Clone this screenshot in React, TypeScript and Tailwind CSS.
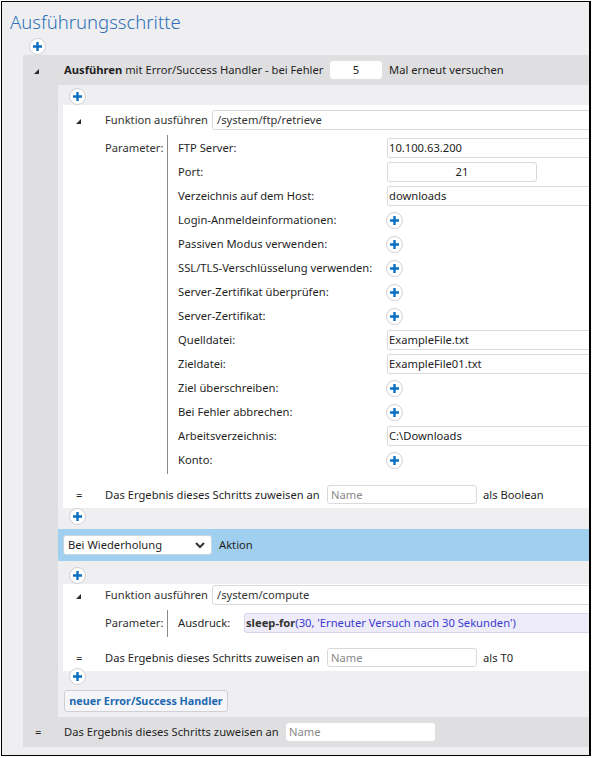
import React from "react";

function Plus({ className = "" }: { className?: string }) {
  return (
    <div
      className={
        "relative z-10 flex h-[17px] w-[17px] shrink-0 items-center justify-center rounded-full border border-[#cfcfd4] bg-white " +
        className
      }
    >
      <svg width="9" height="9" viewBox="0 0 9 9">
        <path d="M4.5 0v9M0 4.5h9" stroke="#0a6fc2" strokeWidth="2.4" />
      </svg>
    </div>
  );
}

function Tri() {
  return (
    <svg width="5" height="5" viewBox="0 0 5 5">
      <polygon points="5,0 5,5 0,5" fill="#2b2b2b" />
    </svg>
  );
}

function TextInput({ value }: { value: string }) {
  return (
    <div className="flex h-[20px] w-[260px] items-center rounded-l-[3px] border border-[#d9d9dc] bg-white pl-[1px] text-[#222]">
      {value}
    </div>
  );
}

function NameInput() {
  return (
    <div className="flex h-[19px] w-[150px] items-center rounded-[3px] border border-[#d9d9dc] bg-white pl-[3px] text-[#8a8a8a]">
      Name
    </div>
  );
}

type Val = { kind: "input"; v: string } | { kind: "port"; v: string } | { kind: "plus" };

const params: [string, Val][] = [
  ["FTP Server:", { kind: "input", v: "10.100.63.200" }],
  ["Port:", { kind: "port", v: "21" }],
  ["Verzeichnis auf dem Host:", { kind: "input", v: "downloads" }],
  ["Login-Anmeldeinformationen:", { kind: "plus" }],
  ["Passiven Modus verwenden:", { kind: "plus" }],
  ["SSL/TLS-Verschlüsselung verwenden:", { kind: "plus" }],
  ["Server-Zertifikat überprüfen:", { kind: "plus" }],
  ["Server-Zertifikat:", { kind: "plus" }],
  ["Quelldatei:", { kind: "input", v: "ExampleFile.txt" }],
  ["Zieldatei:", { kind: "input", v: "ExampleFile01.txt" }],
  ["Ziel überschreiben:", { kind: "plus" }],
  ["Bei Fehler abbrechen:", { kind: "plus" }],
  ["Arbeitsverzeichnis:", { kind: "input", v: "C:\\Downloads" }],
  ["Konto:", { kind: "plus" }],
];

function FuncRow({ path }: { path: string }) {
  return (
    <div className="flex h-[20px] items-center">
      <div className="flex w-[42px] shrink-0 items-center pl-[13px] pt-[2px]">
        <Tri />
      </div>
      <span className="w-[107px] shrink-0 whitespace-nowrap text-[#333]">Funktion ausführen</span>
      <div className="flex h-[20px] w-[400px] items-center rounded-l-[3px] border border-[#d9d9dc] bg-white pl-[4px] text-[#333]">
        {path}
      </div>
    </div>
  );
}

function AssignRow({ suffix }: { suffix: string }) {
  return (
    <div className="flex h-[19px] items-center">
      <div className="w-[42px] shrink-0 pl-[13px]">=</div>
      <span className="w-[222px] shrink-0 whitespace-nowrap">Das Ergebnis dieses Schritts zuweisen an</span>
      <NameInput />
      <span className="ml-[6px] whitespace-nowrap">{suffix}</span>
    </div>
  );
}

export default function App() {
  return (
    <div className="h-[758px] w-[592px] bg-white pl-[1px] pt-[1px]">
      <div className="h-[755px] w-[590px] overflow-hidden border border-r-2 border-black bg-[#efeff1] font-['Noto_Sans',sans-serif] text-[11.2px] leading-[16px] text-[#1f1f1f]">
        <div className="h-[36px] pl-[8px] pt-[7px] text-[18.5px] font-light leading-[26px] text-[#2e6fb7]">
          Ausführungsschritte
        </div>
        <div className="h-[17px] pl-[27px]">
          <Plus />
        </div>

        <div className="ml-[21px] w-[590px] bg-[#dfdfe1]">
          {/* header */}
          <div className="flex h-[30px] items-center">
            <div className="flex w-[41px] shrink-0 items-center pl-[11px] pt-[2px]">
              <Tri />
            </div>
            <span className="w-[266px] shrink-0 whitespace-nowrap">
              <b className="font-bold">Ausführen</b> mit Error/Success Handler - bei Fehler
            </span>
            <div className="flex h-[18px] w-[52px] items-center justify-center rounded-[3px] bg-white">5</div>
            <span className="ml-[7px] whitespace-nowrap">Mal erneut versuchen</span>
          </div>

          {/* body */}
          <div className="flex">
            <div className="w-[35px] shrink-0" />
            <div className="min-w-0 flex-1 bg-[#efeff1]">
              <div className="h-[20px] pl-[11px] pt-[3px]">
                <Plus />
              </div>

              {/* panel 1 */}
              <div className="ml-[5px] bg-white pb-[4px] pt-[5px]">
                <FuncRow path="/system/ftp/retrieve" />
                <div className="mt-[5px] flex">
                  <div className="w-[42px] shrink-0" />
                  <div className="flex h-[20px] w-[62px] shrink-0 items-center pt-[6px] leading-[20px] text-[#333]">
                    Parameter:
                  </div>
                  <div className="border-l border-[#8a8a8a] pl-[10px] pt-[3px]">
                    {params.map(([label, val]) => (
                      <div key={label} className="flex h-[24px] items-start">
                        <div className="flex h-[20px] w-[209px] shrink-0 items-center whitespace-nowrap">{label}</div>
                        {val.kind === "input" && <TextInput value={val.v} />}
                        {val.kind === "port" && (
                          <div className="flex h-[20px] w-[150px] items-center justify-center rounded-[3px] border border-[#d9d9dc] bg-white">
                            {val.v}
                          </div>
                        )}
                        {val.kind === "plus" && <Plus className="ml-[-1px] mt-[2px]" />}
                      </div>
                    ))}
                  </div>
                </div>
                <div className="mt-[11px]">
                  <AssignRow suffix="als Boolean" />
                </div>
              </div>

              <div className="h-[21px] pl-[11px]">
                <Plus />
              </div>

              {/* blue bar */}
              <div className="flex h-[32px] items-center bg-[#a0cfef] pl-[5px]">
                <div className="flex h-[20px] w-[149px] items-center justify-between rounded-[3px] border border-[#c9d6e0] bg-white pl-[4px] pr-[6px]">
                  <span className="whitespace-nowrap">Bei Wiederholung</span>
                  <svg width="10" height="7" viewBox="0 0 10 7">
                    <polyline points="1,1 5,5 9,1" fill="none" stroke="#333" strokeWidth="2" />
                  </svg>
                </div>
                <span className="ml-[7px]">Aktion</span>
              </div>

              <div className="h-[23px] pl-[11px] pt-[6px]">
                <Plus />
              </div>

              {/* panel 2 */}
              <div className="ml-[5px] bg-white pb-[4px] pt-[1px]">
                <FuncRow path="/system/compute" />
                <div className="mt-[5px] flex">
                  <div className="w-[42px] shrink-0" />
                  <div className="flex h-[20px] w-[62px] shrink-0 items-center pt-[6px] leading-[20px] text-[#333]">
                    Parameter:
                  </div>
                  <div className="flex border-l border-[#8a8a8a] pb-[4px] pl-[10px] pt-[3px]">
                    <div className="flex h-[20px] w-[66px] shrink-0 items-center">Ausdruck:</div>
                    <div className="flex h-[20px] w-[400px] items-center whitespace-nowrap rounded-l-[3px] border border-[#d8d6e6] bg-[#eeecf9] pl-[1px]">
                      <span className="font-bold text-[#333]">sleep-for</span>
                      <span className="text-[#3b3bd0]">(30, 'Erneuter Versuch nach 30 Sekunden')</span>
                    </div>
                  </div>
                </div>
                <div className="mt-[11px]">
                  <AssignRow suffix="als T0" />
                </div>
              </div>

              <div className="h-[22px] pl-[11px]">
                <Plus className="-mt-[3px]" />
              </div>

              <div className="pb-[5px] pl-[6px]">
                <div className="flex h-[22px] w-[164px] items-center justify-center whitespace-nowrap rounded-[3px] border border-[#cfcfd4] bg-[#f6f6f8] text-[10.8px] font-bold text-[#1d68b0]">
                  neuer Error/Success Handler
                </div>
              </div>
            </div>
          </div>

          {/* footer */}
          <div className="flex h-[30px] items-center">
            <div className="w-[41px] shrink-0 pl-[12px]">=</div>
            <span className="w-[222px] shrink-0 whitespace-nowrap">Das Ergebnis dieses Schritts zuweisen an</span>
            <div className="flex h-[18px] w-[149px] items-center rounded-[3px] bg-white pl-[3px] text-[#8a8a8a]">Name</div>
          </div>
        </div>
      </div>
    </div>
  );
}
